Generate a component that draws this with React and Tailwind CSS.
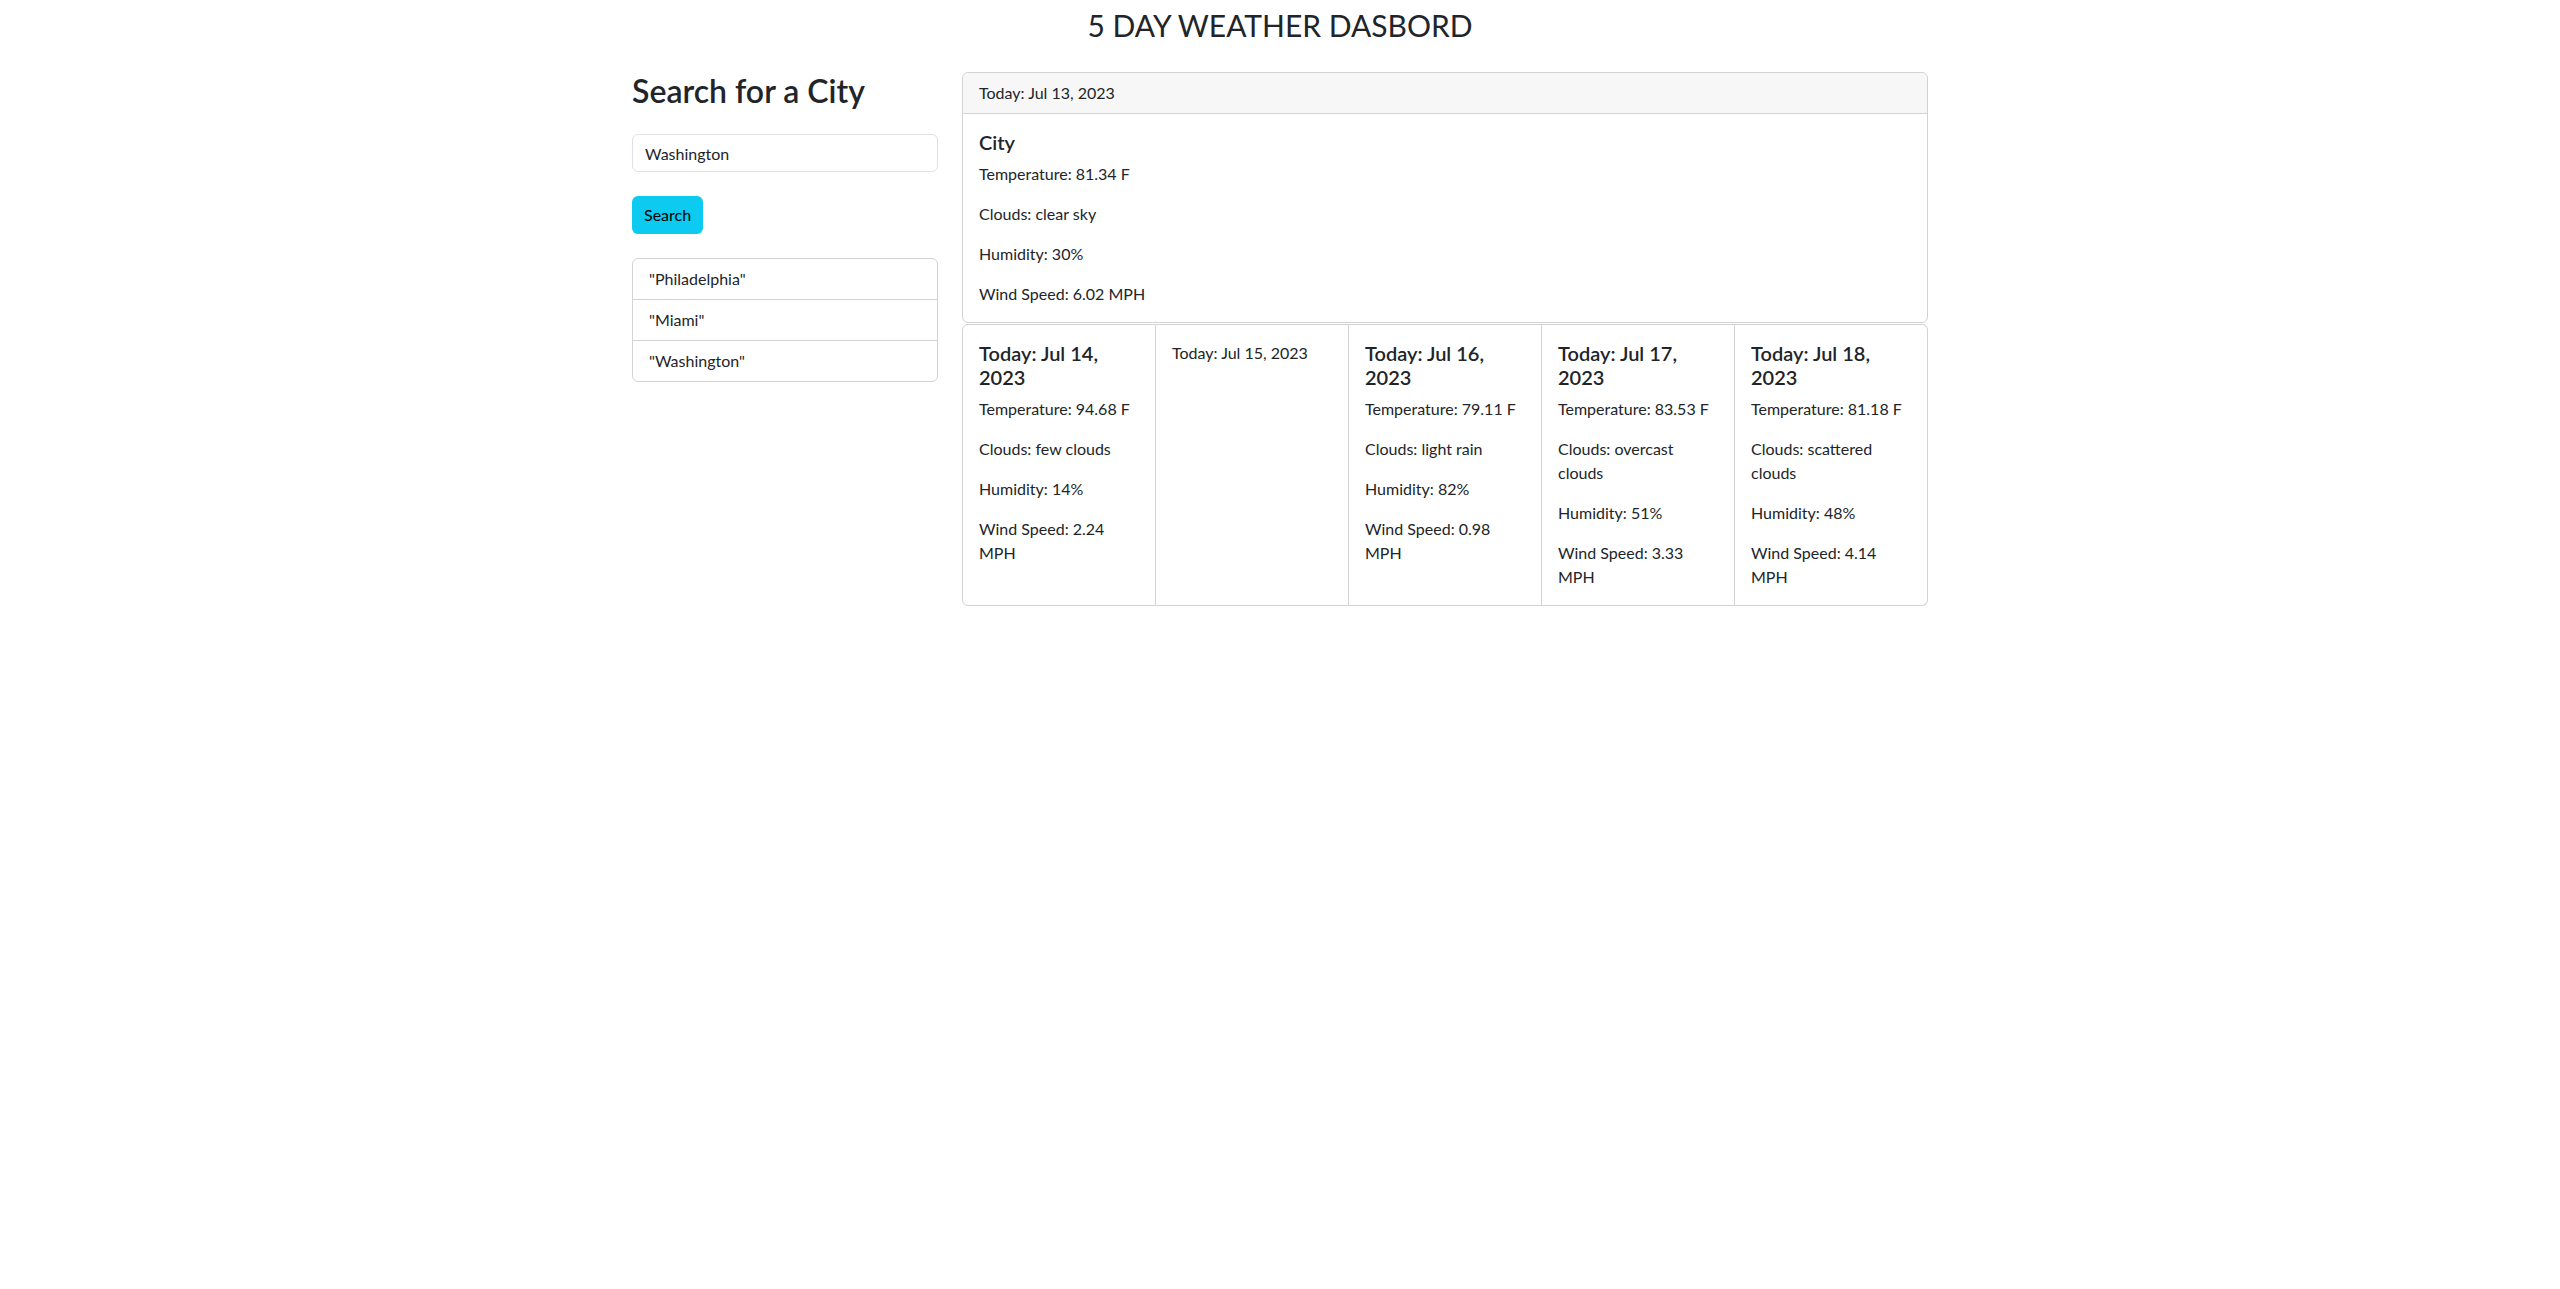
import React from 'react';

const cities = ['"Philadelphia"', '"Miami"', '"Washington"'];

const forecast = [
  { date: 'Today: Jul 14, 2023', temp: '94.68', clouds: 'few clouds', humidity: '14', wind: '2.24' },
  { date: 'Today: Jul 15, 2023', empty: true },
  { date: 'Today: Jul 16, 2023', temp: '79.11', clouds: 'light rain', humidity: '82', wind: '0.98' },
  { date: 'Today: Jul 17, 2023', temp: '83.53', clouds: 'overcast clouds', humidity: '51', wind: '3.33' },
  { date: 'Today: Jul 18, 2023', temp: '81.18', clouds: 'scattered clouds', humidity: '48', wind: '4.14' },
];

function DayCard({ day, index }) {
  const first = index === 0;
  const last = index === forecast.length - 1;
  return (
    <div
      className={`flex-1 min-w-0 border border-[#d3d3d4] p-4 ${first ? 'rounded-l-[6px]' : 'border-l-0'} ${last ? 'rounded-r-[6px]' : ''}`}
    >
      {day.empty ? (
        <p>{day.date}</p>
      ) : (
        <>
          <h5 className="text-[20px] leading-[24px] font-semibold mb-2">{day.date}</h5>
          <p className="mb-4">Temperature: {day.temp} F</p>
          <p className="mb-4">Clouds: {day.clouds}</p>
          <p className="mb-4">Humidity: {day.humidity}%</p>
          <p>Wind Speed: {day.wind} MPH</p>
        </>
      )}
    </div>
  );
}

export default function App() {
  return (
    <div className="min-h-screen bg-white text-[#212529] text-[16px] leading-[24px] font-['Lato','Segoe_UI',sans-serif]">
      <div className="w-[1320px] mx-auto px-3">
        {/* Page title */}
        <div className="h-[72px] pt-[6px] text-center">
          <h1 className="text-[30px] leading-[38px] font-normal">5 DAY WEATHER DASBORD</h1>
        </div>

        <div className="flex -mx-3">
          {/* Search column */}
          <div className="w-[330px] px-3">
            <h2 className="text-[32px] leading-[38px] font-semibold mb-2">Search for a City</h2>
            <input
              type="text"
              defaultValue="Washington"
              className="mt-4 w-full h-[38px] px-3 border border-[#dee2e6] rounded-[6px] text-[16px] text-[#212529] outline-none"
            />
            <button className="mt-6 h-[38px] px-3 bg-[#0dcaf0] rounded-[6px] text-black">Search</button>
            <ul className="mt-6 border border-[#d3d3d4] rounded-[6px]">
              {cities.map((c, i) => (
                <li
                  key={c}
                  className={`px-4 py-2 ${i > 0 ? 'border-t border-[#d3d3d4]' : ''}`}
                >
                  {c}
                </li>
              ))}
            </ul>
          </div>

          {/* Weather column */}
          <div className="flex-1 px-3">
            <div className="border border-[#d3d3d4] rounded-[6px]">
              <div className="px-4 py-2 bg-[#f7f7f7] border-b border-[#d3d3d4] rounded-t-[6px]">
                Today: Jul 13, 2023
              </div>
              <div className="p-4">
                <h5 className="text-[20px] leading-[24px] font-semibold mb-2">City</h5>
                <p className="mb-4">Temperature: 81.34 F</p>
                <p className="mb-4">Clouds: clear sky</p>
                <p className="mb-4">Humidity: 30%</p>
                <p>Wind Speed: 6.02 MPH</p>
              </div>
            </div>

            <div className="flex mt-px">
              {forecast.map((d, i) => (
                <DayCard key={d.date} day={d} index={i} />
              ))}
            </div>
          </div>
        </div>
      </div>
    </div>
  );
}
